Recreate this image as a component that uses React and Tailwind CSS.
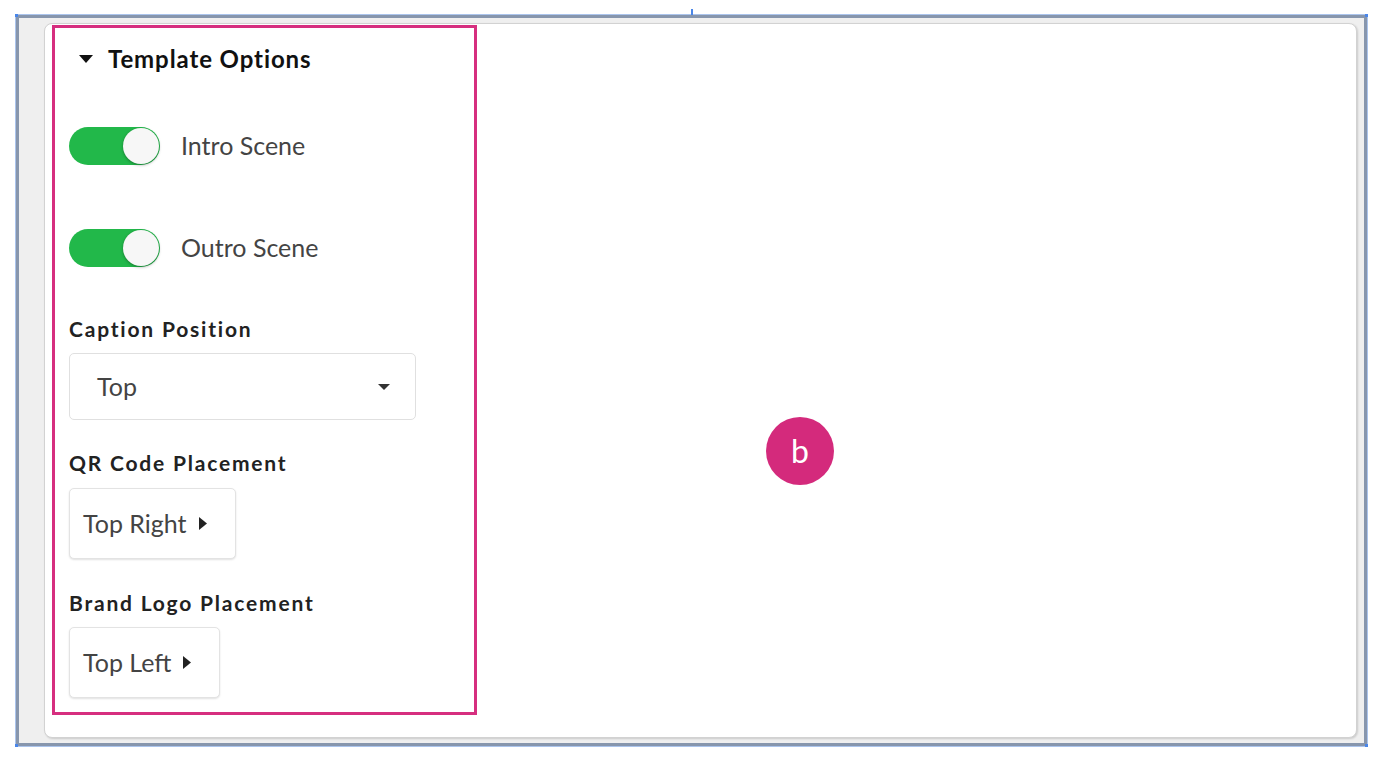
import React, { useState } from 'react';

const Toggle = ({ on, onChange }) => (
  <button
    onClick={() => onChange(!on)}
    className={`relative w-[91px] h-[38px] rounded-full shrink-0 ${on ? 'bg-[#22b84a]' : 'bg-[#d5d5d5]'}`}
  >
    <span
      className={`absolute top-[1px] w-[36px] h-[36px] rounded-full bg-[#f7f7f7] shadow-[0_1px_3px_rgba(0,0,0,0.35)] ${on ? 'right-[1px]' : 'left-[1px]'}`}
    />
  </button>
);

const Label = ({ children }) => (
  <div className="h-[24px] flex items-center text-[21px] font-bold text-[#222] tracking-[1.8px] font-['Lato',sans-serif]">
    {children}
  </div>
);

const PlacementButton = ({ value }) => (
  <button className="self-start h-[71px] pl-[13px] pr-[28px] flex items-center gap-[12px] bg-white border border-[#e3e3e3] rounded-[5px] shadow-[0_1px_2px_rgba(0,0,0,0.12)] text-[25px] text-[#444] font-['Lato',sans-serif]">
    <span>{value}</span>
    <svg width="8" height="13" viewBox="0 0 8 13">
      <path d="M0 0 L8 6.5 L0 13 Z" fill="#222" />
    </svg>
  </button>
);

const App = () => {
  const [intro, setIntro] = useState(true);
  const [outro, setOutro] = useState(true);

  return (
    <div className="w-[1376px] h-[763px] bg-white pt-[15px] pl-[16px]">
      <div className="relative w-[1351px] h-[731px] border-[3px] border-[#8796ad] shadow-[0_0_0_1px_#abc4ec] bg-[#efefef] pt-[5px] pl-[25px] pr-[7px] pb-[5px]">
        <div className="relative h-full bg-white border border-[#d2d2d2] rounded-[8px] shadow-[1px_1px_2px_rgba(0,0,0,0.15)] pt-[1px] pl-[7px]">
          {/* Template options panel */}
          <div className="w-[425px] h-[690px] border-[3px] border-[#d62f7f] pl-[14px] flex flex-col">
            <div className="h-[62px] flex items-center gap-[15px] pl-[10px]">
              <svg width="14" height="8" viewBox="0 0 14 8">
                <path d="M0 0 H14 L7 8 Z" fill="#111" />
              </svg>
              <span className="text-[24px] font-bold text-[#111] tracking-[0.9px] font-['Lato',sans-serif]">
                Template Options
              </span>
            </div>

            <div className="mt-[37px] h-[38px] flex items-center gap-[21px]">
              <Toggle on={intro} onChange={setIntro} />
              <span className="text-[25px] text-[#444] font-['Lato',sans-serif]">Intro Scene</span>
            </div>

            <div className="mt-[64px] h-[38px] flex items-center gap-[21px]">
              <Toggle on={outro} onChange={setOutro} />
              <span className="text-[25px] text-[#444] font-['Lato',sans-serif]">Outro Scene</span>
            </div>

            <div className="mt-[50px]">
              <Label>Caption Position</Label>
            </div>
            <div className="mt-[12px] w-[347px] h-[67px] border border-[#e0e0e0] rounded-[5px] flex items-center justify-between pl-[27px] pr-[25px]">
              <span className="text-[25px] text-[#444] font-['Lato',sans-serif]">Top</span>
              <svg width="12" height="6" viewBox="0 0 12 6">
                <path d="M0 0 H12 L6 6 Z" fill="#333" />
              </svg>
            </div>

            <div className="mt-[31px]">
              <Label>QR Code Placement</Label>
            </div>
            <div className="mt-[13px] flex">
              <PlacementButton value="Top Right" />
            </div>

            <div className="mt-[32px]">
              <Label>Brand Logo Placement</Label>
            </div>
            <div className="mt-[12px] flex">
              <PlacementButton value="Top Left" />
            </div>
          </div>

          {/* annotation badge */}
          <div className="absolute left-[721px] top-[393px] w-[68px] h-[68px] rounded-full bg-[#d42a7c] flex items-center justify-center text-white text-[32px] font-['Lato',sans-serif]">
            b
          </div>
        </div>
        {/* selection handle marks */}
        <span className="absolute left-[672px] top-[-9px] w-[2px] h-[6px] bg-[#4a86e8]" />
        <span className="absolute left-[-4px] top-[-4px] w-[3px] h-[3px] bg-[#4a86e8]" />
        <span className="absolute right-[-4px] top-[-4px] w-[3px] h-[3px] bg-[#4a86e8]" />
        <span className="absolute left-[-4px] bottom-[-4px] w-[3px] h-[3px] bg-[#4a86e8]" />
        <span className="absolute right-[-4px] bottom-[-4px] w-[3px] h-[3px] bg-[#4a86e8]" />
      </div>
    </div>
  );
};

export default App;
